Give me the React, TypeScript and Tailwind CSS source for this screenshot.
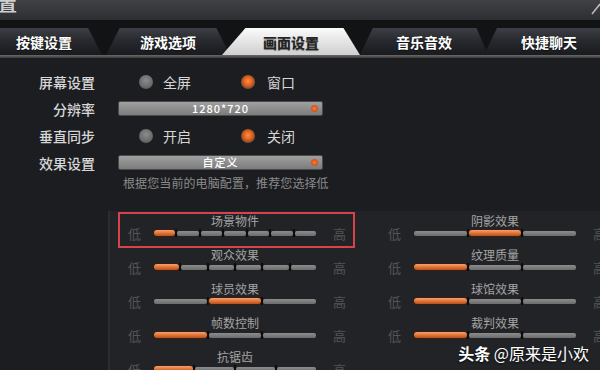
import React from "react";

const FONT = "font-['Noto_Sans_CJK_SC','Noto_Sans',sans-serif]";

type Slider = { label: string; n: number; on: number };

const leftSliders: Slider[] = [
  { label: "场景物件", n: 7, on: 0 },
  { label: "观众效果", n: 6, on: 0 },
  { label: "球员效果", n: 3, on: 1 },
  { label: "帧数控制", n: 3, on: 0 },
  { label: "抗锯齿", n: 4, on: 0 },
];

const rightSliders: Slider[] = [
  { label: "阴影效果", n: 3, on: 1 },
  { label: "纹理质量", n: 3, on: 0 },
  { label: "球馆效果", n: 3, on: 0 },
  { label: "裁判效果", n: 3, on: 0 },
];

function Radio({ on }: { on: boolean }) {
  return on ? (
    <span className="w-[14px] h-[14px] rounded-full shrink-0 bg-[radial-gradient(circle_at_50%_45%,#ff9040_0%,#e2621f_40%,#7a4a34_72%,#3a3a3a_100%)]" />
  ) : (
    <span className="w-[14px] h-[14px] rounded-full shrink-0 bg-[radial-gradient(circle_at_50%_40%,#8c8c8c_0%,#6a6a6a_60%,#4a4a4a_100%)]" />
  );
}

function Dropdown({ value }: { value: string }) {
  return (
    <div className="relative w-[205px] h-[15px] rounded-[2px] bg-gradient-to-b from-[#a0a0a0] to-[#7c7c7c] border border-[#4a4a4a] flex items-center justify-center">
      <span className="text-[11px] leading-none font-medium text-white tracking-[1px]">{value}</span>
      <span className="absolute right-[4px] top-[3px] w-[7px] h-[7px] rounded-full bg-[radial-gradient(circle,#ff7a35_0%,#d8561c_60%,#9a5a40_100%)]" />
    </div>
  );
}

function SettingRow({ label, children }: { label: string; children: React.ReactNode }) {
  return (
    <div className="flex items-center h-[27px]">
      <div className="w-[95px] text-right text-[14px] font-medium text-[#d6d6d6] leading-none">{label}</div>
      <div className="ml-[23px] flex items-center">{children}</div>
    </div>
  );
}

function RadioPair({ a, b }: { a: string; b: string }) {
  return (
    <div className="flex items-center">
      <div className="ml-[21px] w-[102px] flex items-center gap-[10px]">
        <Radio on={false} />
        <span className="text-[14px] text-[#d6d6d6] leading-none">{a}</span>
      </div>
      <div className="flex items-center gap-[12px]">
        <Radio on={true} />
        <span className="text-[14px] text-[#d6d6d6] leading-none">{b}</span>
      </div>
    </div>
  );
}

function Bar({ n, on }: { n: number; on: number }) {
  const items: React.ReactNode[] = [];
  for (let i = 0; i < n; i++) {
    if (i > 0) items.push(<span key={"t" + i} className="w-[2px] h-[8px] bg-[#0c0c0c] shrink-0" />);
    items.push(
      i === on ? (
        <span
          key={i}
          className="flex-1 h-[6px] rounded-[3px] bg-gradient-to-b from-[#f4a070] via-[#e27538] to-[#b4501f] shadow-[0_0_0_1px_#3a1e10]"
        />
      ) : (
        <span key={i} className="flex-1 h-[5px] rounded-[2px] bg-gradient-to-b from-[#8c8c8c] to-[#6c6c6c]" />
      )
    );
  }
  return <div className="w-[162px] flex items-center">{items}</div>;
}

function SliderRow({ s, boxed }: { s: Slider; boxed?: boolean }) {
  return (
    <div className="relative h-[34px] w-[237px] pt-[2px]">
      <div className="ml-[36px] w-[162px] text-center text-[12px] leading-[14px] text-[#a4a4a4]">{s.label}</div>
      <div className="flex items-center h-[12px] mt-[-1px]">
        <span className="ml-[10px] w-[26px] text-[13px] leading-none text-[#545454]">低</span>
        <Bar n={s.n} on={s.on} />
        <span className="ml-[17px] text-[13px] leading-none text-[#545454]">高</span>
      </div>
      {boxed && (
        <span className="absolute left-0 top-0 w-[237px] h-[36px] border-2 border-[#d7434c]" />
      )}
    </div>
  );
}

function Tab({ label, active, className }: { label: string; active?: boolean; className: string }) {
  return (
    <div
      className={`h-[27px] shrink-0 flex items-center justify-center pt-[1px] ${className} ${
        active
          ? "relative z-10 bg-gradient-to-b from-[#fbfbfb] to-[#cfcfcf] text-[#222]"
          : "bg-gradient-to-b from-[#3c3f45] via-[#26282d] to-[#1a1b1f] text-white"
      }`}
    >
      <span className="text-[14px] font-bold leading-none [text-shadow:0_1px_1px_rgba(0,0,0,0.5)]">{label}</span>
    </div>
  );
}

export default function App() {
  return (
    <div className={`relative w-[600px] h-[370px] overflow-hidden bg-[#1c1d21] ${FONT}`}>
      {/* title bar */}
      <div className="h-[20px] bg-gradient-to-b from-[#404145] to-[#2e2f33] flex justify-between overflow-hidden">
        <span className="text-[19px] leading-none font-bold text-[#cfcfcf] mt-[-7px] ml-[-2px]">置</span>
        <svg width="10" height="14" viewBox="0 0 10 14" className="mt-[2px]">
          <line x1="2" y1="12" x2="10" y2="2" stroke="#bdbdbd" strokeWidth="1.5" />
        </svg>
      </div>
      <div className="h-[8px] bg-[#121315]" />

      {/* tabs */}
      <div className="h-[27px] bg-[#121315] flex overflow-hidden">
        <Tab label="按键设置" className="ml-[-14px] w-[116px] [clip-path:polygon(12%_0,88%_0,100%_100%,0_100%)]" />
        <Tab label="游戏选项" className="ml-[4px] w-[124px] [clip-path:polygon(11%_0,89%_0,100%_100%,0_100%)]" />
        <Tab label="画面设置" active className="ml-[-8px] w-[138px] [clip-path:polygon(17%_0,88%_0,100%_100%,0_100%)]" />
        <Tab label="音乐音效" className="ml-0 w-[128px] [clip-path:polygon(10%_0,91%_0,100%_100%,0_100%)]" />
        <Tab label="快捷聊天" className="ml-[-4px] w-[130px] [clip-path:polygon(10%_0,100%_0,100%_100%,0_100%)]" />
      </div>
      <div className="h-[3px] bg-gradient-to-b from-[#6a6a6a] to-[#3a3a3a]" />

      {/* settings */}
      <div className="pt-[10px]">
        <SettingRow label="屏幕设置">
          <RadioPair a="全屏" b="窗口" />
        </SettingRow>
        <SettingRow label="分辨率">
          <Dropdown value="1280*720" />
        </SettingRow>
        <SettingRow label="垂直同步">
          <RadioPair a="开启" b="关闭" />
        </SettingRow>
        <SettingRow label="效果设置">
          <Dropdown value="自定义" />
        </SettingRow>
        <div className="ml-[123px] h-[14px] text-[12px] leading-[14px] text-[#8a8a8a] tracking-[0.1px]">
          根据您当前的电脑配置，推荐您选择低
        </div>
      </div>

      {/* quality panel */}
      <div className="ml-[108px] mt-[21px] h-[200px] bg-[#222327] border-l-2 border-[#2c2d31] pl-[8px] pt-[1px] flex gap-[23px]">
        <div className="flex flex-col">
          {leftSliders.map((s, i) => (
            <SliderRow key={s.label} s={s} boxed={i === 0} />
          ))}
        </div>
        <div className="flex flex-col shrink-0">
          {rightSliders.map((s) => (
            <SliderRow key={s.label} s={s} />
          ))}
        </div>
      </div>

      {/* watermark */}
      <div className="absolute right-[11px] bottom-[9px] text-[16px] leading-none text-white [text-shadow:0_1px_2px_rgba(0,0,0,0.8)]">
        <span className="font-bold">头条</span> @原来是小欢
      </div>
    </div>
  );
}
